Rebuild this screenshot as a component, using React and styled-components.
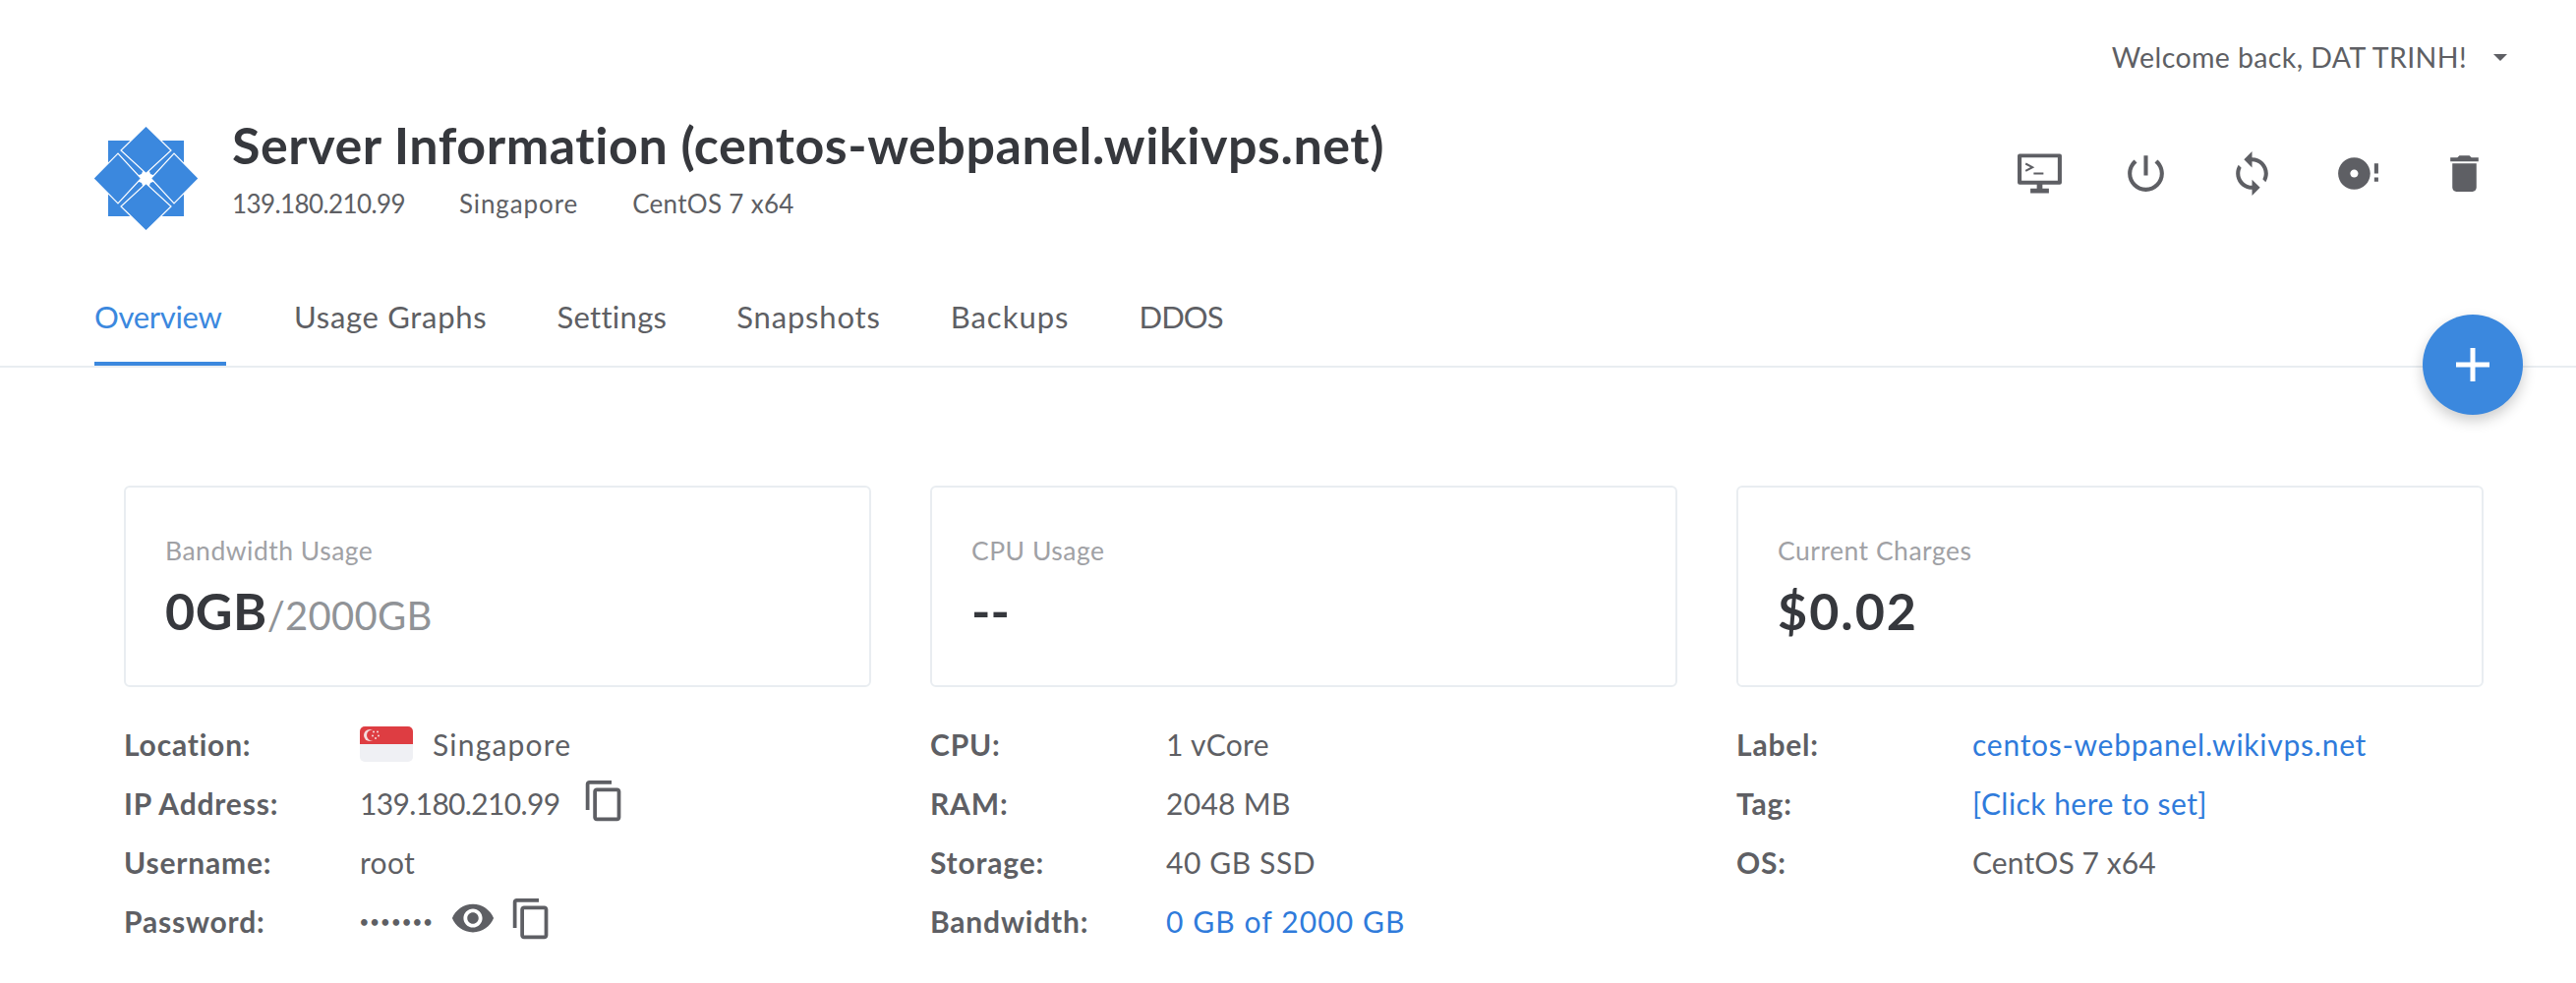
import React from 'react'
import styled, { createGlobalStyle } from 'styled-components'

const BLUE = '#3b88de'
const TEXT = '#5e5f64'
const DARK = '#36383d'
const LINE = '#e9edf1'

const GlobalStyle = createGlobalStyle`
  html, body {
    margin:0;
    padding:0;
    background:#fff;
    font-family:"Lato", "Open Sans", sans-serif;
    color:${TEXT};
  }
`

const Page = styled.div`
  position:relative;
  width:2620px;
  height:1000px;
  overflow:hidden;
`

const TopBar = styled.div`
  display:flex;
  justify-content:flex-end;
  align-items:center;
  height:36px;
  padding:40px 70px 0 0;
  font-size:28.5px;
  letter-spacing:.4px;
`

const Caret = styled.span`
  width:0;
  height:0;
  margin-left:27px;
  border-left:7px solid transparent;
  border-right:7px solid transparent;
  border-top:7px solid ${TEXT};
`

const Header = styled.header`
  display:flex;
  align-items:flex-start;
  height:112px;
  margin-top:38px;
  padding:0 60px 0 96px;
`

const LogoWrap = styled.div`
  flex:none;
  margin-top:14px;
`

const Titles = styled.div`
  flex:1;
  margin-left:35px;
`

const Title = styled.h1`
  margin:0;
  font-size:52px;
  line-height:66px;
  font-weight:700;
  letter-spacing:.55px;
  color:${DARK};
`

const Meta = styled.div`
  display:flex;
  gap:55px;
  margin-top:11px;
  font-size:26px;
  line-height:32px;
`

const Spaced = styled.span`
  letter-spacing:${({ $t }) => $t}px;
`

const Actions = styled.div`
  display:flex;
  margin-top:38px;
`

const ActionButton = styled.button`
  width:108px;
  height:50px;
  padding:0;
  border:0;
  background:none;
  color:${TEXT};
  display:flex;
  justify-content:center;
`

const Tabs = styled.nav`
  display:flex;
  gap:71px;
  height:97px;
  margin-top:49px;
  padding-left:96px;
  border-bottom:2px solid ${LINE};
`

const Tab = styled.a`
  box-sizing:border-box;
  height:97px;
  padding-top:28px;
  font-size:31px;
  line-height:38px;
  letter-spacing:${({ $t }) => $t}px;
  color:${({ $active }) => ($active ? BLUE : TEXT)};
  border-bottom:${({ $active }) => ($active ? `4px solid ${BLUE}` : 'none')};
  min-width:${({ $active }) => ($active ? '134px' : 'auto')};
  margin-right:${({ $active }) => ($active ? '-2px' : '0')};
`

const Fab = styled.button`
  position:absolute;
  left:2464px;
  top:320px;
  width:102px;
  height:102px;
  padding:0;
  border:0;
  border-radius:50%;
  background:${BLUE};
  box-shadow:0 6px 14px rgba(0,0,0,.2);
  display:flex;
  align-items:center;
  justify-content:center;
`

const Content = styled.main`
  display:grid;
  grid-template-columns:repeat(3, 760px);
  column-gap:60px;
  padding:120px 0 0 126px;
`

const Column = styled.section`
  display:flex;
  flex-direction:column;
`

const Card = styled.div`
  box-sizing:border-box;
  height:205px;
  padding:48px 40px 0;
  border:2px solid ${LINE};
  border-radius:6px;
`

const CardLabel = styled.div`
  font-size:26.5px;
  line-height:32px;
  letter-spacing:.5px;
  color:#a0a1a5;
`

const CardValue = styled.div`
  margin-top:15px;
  font-size:52px;
  line-height:60px;
  font-weight:700;
  letter-spacing:${({ $t }) => $t || 0}px;
  color:${DARK};
`

const CardTotal = styled.span`
  font-size:40px;
  font-weight:400;
  letter-spacing:.3px;
  color:#909397;
`

const Details = styled.dl`
  display:grid;
  grid-template-columns:240px 1fr;
  grid-auto-rows:60px;
  align-items:center;
  margin:28px 0 0;
`

const Term = styled.dt`
  font-size:30px;
  font-weight:700;
  letter-spacing:.8px;
`

const Value = styled.dd`
  display:flex;
  align-items:center;
  margin:0;
  font-size:30px;
  letter-spacing:.3px;
`

const Link = styled.a`
  color:#2f7bdb;
  letter-spacing:${({ $t }) => $t}px;
`

const FlagSlot = styled.span`
  flex:none;
  display:flex;
  margin-right:20px;
`

const IconSlot = styled.span`
  flex:none;
  display:flex;
  margin-left:${({ $gap }) => $gap}px;
  margin-top:${({ $lift }) => ($lift ? -$lift * 2 : 0)}px;
`

const Dots = styled.span`
  font-size:15px;
  line-height:20px;
  font-weight:700;
  letter-spacing:2.1px;
  white-space:nowrap;
`

const MaterialIcon = ({ d, size = 49 }) => (
  <svg width={size} height={size} viewBox="0 0 24 24" fill="currentColor" style={{ display: 'block', flex: 'none' }}>
    <path d={d} />
  </svg>
)

const COPY = 'M16 1H4c-1.1 0-2 .9-2 2v14h2V3h12V1zm3 4H8c-1.1 0-2 .9-2 2v14c0 1.1.9 2 2 2h11c1.1 0 2-.9 2-2V7c0-1.1-.9-2-2-2zm0 16H8V7h11v14z'
const EYE = 'M12 4.5C7 4.5 2.73 7.61 1 12c1.73 4.39 6 7.5 11 7.5s9.27-3.11 11-7.5c-1.73-4.39-6-7.5-11-7.5zM12 17c-2.76 0-5-2.24-5-5s2.24-5 5-5 5 2.24 5 5-2.24 5-5 5zm0-8c-1.66 0-3 1.34-3 3s1.34 3 3 3 3-1.34 3-3-1.34-3-3-3z'
const POWER = 'M13 3h-2v10h2V3zm4.83 2.17l-1.42 1.42C17.99 7.86 19 9.81 19 12c0 3.87-3.13 7-7 7s-7-3.13-7-7c0-2.19 1.01-4.14 2.58-5.42L6.17 5.17C4.23 6.82 3 9.26 3 12c0 4.97 4.03 9 9 9s9-4.03 9-9c0-2.74-1.23-5.18-3.17-6.83z'
const SYNC = 'M12 4V1L8 5l4 4V6c3.31 0 6 2.69 6 6 0 1.01-.25 1.97-.7 2.8l1.46 1.46C19.54 15.03 20 13.57 20 12c0-4.42-3.58-8-8-8zm0 14c-3.31 0-6-2.69-6-6 0-1.01.25-1.97.7-2.8L5.24 7.74C4.46 8.97 4 10.43 4 12c0 4.42 3.58 8 8 8v3l4-4-4-4v3z'
const DISC = 'M20 16h2v-2h-2v2zm0-9v5h2V7h-2zM10 4c-4.42 0-8 3.58-8 8s3.58 8 8 8 8-3.58 8-8-3.58-8-8-8zm0 10c-1.1 0-2-.9-2-2s.9-2 2-2 2 .9 2 2-.9 2-2 2z'
const TRASH = 'M6 19c0 1.1.9 2 2 2h8c1.1 0 2-.9 2-2V7H6v12zM19 4h-3.5l-1-1h-5l-1 1H5v2h14V4z'

const ConsoleIcon = () => (
  <svg width="49" height="49" viewBox="0 0 24 24" style={{ display: 'block' }}>
    <path
      fill="currentColor"
      fillRule="evenodd"
      d="M2 2.2h20a1 1 0 0 1 1 1v13.3a1 1 0 0 1-1 1h-8.6v2h3.2v2.300H7.400v-2.300h3.200v-2H2a1 1 0 0 1-1-1V3.200a1 1 0 0 1 1-1zM3 4.100v11.500h18V4.100z"
    />
    <path fill="none" stroke="currentColor" strokeWidth="1" d="M5 7.100l3.400 1.800L5 10.700M9 12h4.900" />
  </svg>
)

const Logo = () => (
  <svg width="105" height="107" viewBox="0 0 105 105" style={{ display: 'block' }}>
    <rect x="14" y="14" width="77" height="77" fill={BLUE} />
    <path d="M52.500 36L57 48L69 52.500L57 57L52.500 69L48 57L36 52.500L48 48Z" fill="#fff" />
    <g fill={BLUE} stroke="#fff" strokeWidth="1.200">
      <path d="M52.500 -1L78 24L52.500 47.500L27 24Z" />
      <path d="M-1 52.500L24 27L47.500 52.500L24 78Z" />
      <path d="M106 52.500L81 27L57.500 52.500L81 78Z" />
      <path d="M52.500 106L78 81L52.500 57.500L27 81Z" />
    </g>
  </svg>
)

const SingaporeFlag = () => (
  <svg width="54" height="36" viewBox="0 0 54 36" style={{ display: 'block' }}>
    <defs>
      <clipPath id="flagClip"><rect width="54" height="36" rx="5" /></clipPath>
    </defs>
    <g clipPath="url(#flagClip)">
      <rect width="54" height="18" fill="#de3d42" />
      <rect y="18" width="54" height="18" fill="#eff0f4" />
      <circle cx="10" cy="9" r="6" fill="#f5dcdd" />
      <circle cx="12.500" cy="9" r="5.500" fill="#de3d42" />
      <circle cx="14" cy="5.500" r="1" fill="#f5dcdd" />
      <circle cx="18" cy="5.500" r="1" fill="#f5dcdd" />
      <circle cx="19" cy="9.500" r="1" fill="#f5dcdd" />
      <circle cx="16" cy="12" r="1" fill="#f5dcdd" />
      <circle cx="13" cy="9.500" r="1" fill="#f5dcdd" />
    </g>
  </svg>
)

const TABS = [
  ['Overview', -0.3],
  ['Usage Graphs', 0.7],
  ['Settings', 0.3],
  ['Snapshots', 0.8],
  ['Backups', 1],
  ['DDOS', -0.9],
]

const COLUMNS = [
  {
    label: 'Bandwidth Usage',
    value: '0GB',
    tracking: 0.5,
    total: '/2000GB',
    rows: [
      ['Location:', <><FlagSlot><SingaporeFlag /></FlagSlot><Spaced $t={1.2}>Singapore</Spaced></>],
      ['IP Address:', <><Spaced $t={-0.66}>139.180.210.99</Spaced><IconSlot $gap={23} $lift={3}><MaterialIcon d={COPY} size={45} /></IconSlot></>],
      ['Username:', 'root'],
      ['Password:', <><Dots>•••••••</Dots><IconSlot $gap={16} $lift={3}><MaterialIcon d={EYE} size={46} /></IconSlot><IconSlot $gap={14} $lift={3}><MaterialIcon d={COPY} size={45} /></IconSlot></>],
    ],
  },
  {
    label: 'CPU Usage',
    value: '--',
    rows: [
      ['CPU:', '1 vCore'],
      ['RAM:', '2048 MB'],
      ['Storage:', <Spaced $t={.6}>40 GB SSD</Spaced>],
      ['Bandwidth:', <Link $t={1.1}>0 GB of 2000 GB</Link>],
    ],
  },
  {
    label: 'Current Charges',
    value: '$0.02',
    tracking: 2,
    rows: [
      ['Label:', <Link $t={.75}>centos-webpanel.wikivps.net</Link>],
      ['Tag:', <Link $t={.45}>[Click here to set]</Link>],
      ['OS:', <Spaced $t={.1}>CentOS 7 x64</Spaced>],
    ],
  },
]

const App = () => (
  <Page>
    <GlobalStyle />
    <TopBar>
      Welcome back, DAT TRINH!
      <Caret />
    </TopBar>
    <Header>
      <LogoWrap><Logo /></LogoWrap>
      <Titles>
        <Title>Server Information (centos-webpanel.wikivps.net)</Title>
        <Meta>
          <Spaced $t={-0.6}>139.180.210.99</Spaced>
          <Spaced $t={0.9}>Singapore</Spaced>
          <Spaced $t={0.3}>CentOS 7 x64</Spaced>
        </Meta>
      </Titles>
      <Actions>
        <ActionButton><ConsoleIcon /></ActionButton>
        <ActionButton><MaterialIcon d={POWER} /></ActionButton>
        <ActionButton><MaterialIcon d={SYNC} /></ActionButton>
        <ActionButton><MaterialIcon d={DISC} /></ActionButton>
        <ActionButton><MaterialIcon d={TRASH} /></ActionButton>
      </Actions>
    </Header>
    <Tabs>
      {TABS.map(([tab, t], i) => (
        <Tab key={tab} $active={i === 0} $t={t}>{tab}</Tab>
      ))}
    </Tabs>
    <Fab>
      <svg width="34" height="34" viewBox="0 0 34 34"><path d="M14.500 0h5v14.500H34v5H19.500V34h-5V19.500H0v-5h14.500z" fill="#fff" /></svg>
    </Fab>
    <Content>
      {COLUMNS.map((col) => (
        <Column key={col.label}>
          <Card>
            <CardLabel>{col.label}</CardLabel>
            <CardValue $t={col.tracking}>
              {col.value}
              {col.total && <CardTotal>{col.total}</CardTotal>}
            </CardValue>
          </Card>
          <Details>
            {col.rows.map(([term, value]) => (
              <React.Fragment key={term}>
                <Term>{term}</Term>
                <Value>{value}</Value>
              </React.Fragment>
            ))}
          </Details>
        </Column>
      ))}
    </Content>
  </Page>
)

export default App
